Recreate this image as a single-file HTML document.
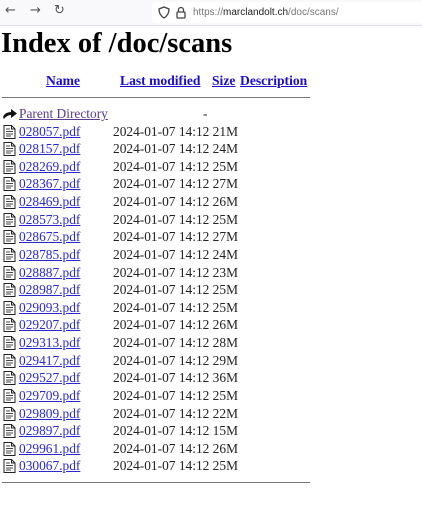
<!DOCTYPE html>
<html><head><style>
body{margin:0;width:422px;height:520px;background:#fff;position:relative;overflow:hidden;font-family:"Liberation Serif",serif;font-size:13.4px;color:#222}
.bar{position:absolute;left:0;top:0;width:422px;height:25px;background:#f9f9fb;border-bottom:1px solid #e0e0e6}
.url{position:absolute;left:152px;top:2px;width:270px;height:21px;background:#fff;border-radius:4px 0 0 4px;font-family:"Liberation Sans",sans-serif;font-size:10px;color:#777;line-height:21px}
.nav{position:absolute;top:3px;font-family:"DejaVu Sans",sans-serif;font-size:13px;color:#555}
h1{position:absolute;left:1px;top:28px;margin:0;font-size:28.5px;font-weight:bold;color:#000;white-space:nowrap}
a{color:#1a0dab;text-decoration:underline}
.h{position:absolute;top:73px;font-weight:bold;font-size:13.6px}
.h a{color:#1a0dcc}
hr{position:absolute;left:2px;width:308px;margin:0;border:0;border-top:1px solid #777;height:0}
.r{position:absolute;left:0;height:17px;line-height:17px;white-space:nowrap}
.r .i{position:absolute;left:3px;top:2px}
.r a{position:absolute;left:19px;color:#2a2acc}
.r .d{position:absolute;left:113px}
</style></head><body>
<div class="bar">
<span class="nav" style="left:5px">&#8592;</span>
<span class="nav" style="left:30px">&#8594;</span>
<span class="nav" style="left:54px">&#8635;</span>
<div class="url"><svg style="position:absolute;left:6px;top:4px" width="12" height="13" viewBox="0 0 12 13"><path d="M6 1 L11 3 Q11 9 6 12 Q1 9 1 3 Z" fill="none" stroke="#444" stroke-width="1.3"/></svg><svg style="position:absolute;left:24px;top:4px" width="10" height="13" viewBox="0 0 10 13"><path d="M2.5 6V4a2.5 2.5 0 0 1 5 0v2" fill="none" stroke="#444" stroke-width="1.3"/><rect x="1" y="6" width="8" height="6" rx="1" fill="none" stroke="#444" stroke-width="1.3"/></svg><span style="position:absolute;left:41px">https://<span style="color:#222">marclandolt.ch</span>/doc/scans/</span></div>
</div>
<h1>Index of /doc/scans</h1>
<div class="h" style="left:46px"><a>Name</a></div>
<div class="h" style="left:120px"><a>Last modified</a></div>
<div class="h" style="left:212px"><a>Size</a></div>
<div class="h" style="left:240px"><a>Description</a></div>
<hr style="top:97px">
<div class="r" style="top:105px"><svg class="i" style="left:2px" width="16" height="13" viewBox="0 0 16 13"><path d="M1 10 Q3 5 9 5 L9 2 L15 6.5 L9 11 L9 8 Q5 8 2 12 Z" fill="#111"/></svg><a style="color:#5a3a8a">Parent Directory</a><span class="d" style="left:203px">-</span></div>
<div id="rows"></div>
<hr style="top:482px">
<script>
var n=["028057 21M","028157 24M","028269 25M","028367 27M","028469 26M","028573 25M","028675 27M","028785 24M","028887 23M","028987 25M","029093 25M","029207 26M","029313 28M","029417 29M","029527 36M","029709 25M","029809 22M","029897 15M","029961 26M","030067 25M"];
var h="";for(var i=0;i<n.length;i++){var p=n[i].split(" ");var t=122.5+i*17.63;
h+='<div class="r" style="top:'+t+'px"><svg class="i" width="13" height="14" viewBox="0 0 13 14"><path d="M1 .5H8.5L12 4V13.5H1Z" fill="#fff" stroke="#222"/><path d="M8.5 .5V4H12" fill="none" stroke="#222"/><path d="M3 4h4M3 6.5h7M3 9h7M3 11h5" stroke="#444"/></svg><a>'+p[0]+'.pdf</a><span class="d">2024-01-07 14:12 '+p[1]+'</span></div>';}
document.getElementById("rows").innerHTML=h;
</script>
</body></html>
